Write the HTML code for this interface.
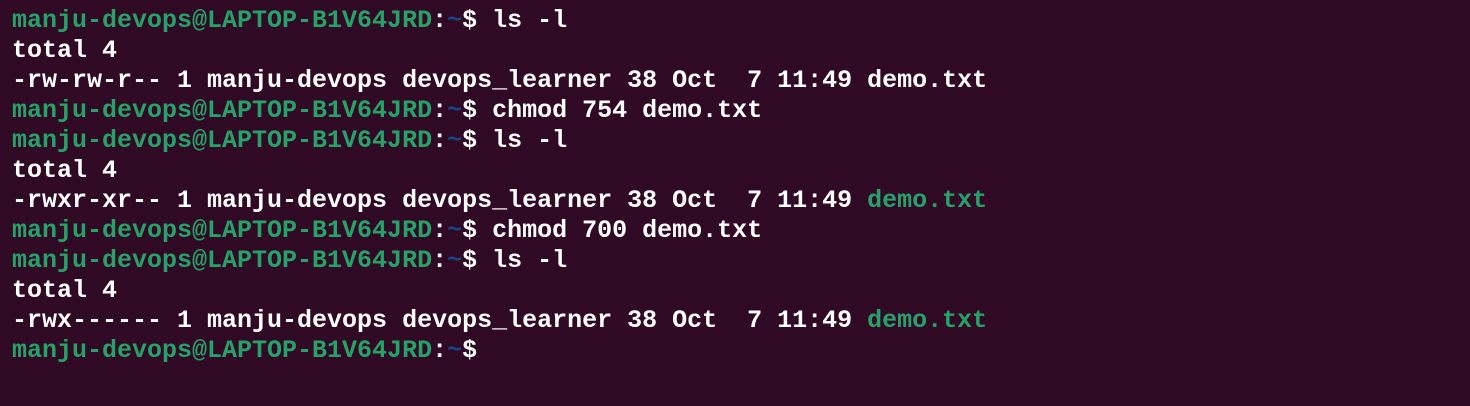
<!DOCTYPE html>
<html><head><style>
html,body{margin:0;padding:0;width:1470px;height:406px;background:#300a24;overflow:hidden}
pre{margin:0;padding:6px 0 0 12px;font-family:"Liberation Mono",monospace;font-size:25px;line-height:30px;color:#ffffff;font-weight:bold}
.g{color:#26a269}.b{color:#12488b}
</style></head><body><pre><span class="g">manju-devops@LAPTOP-B1V64JRD</span>:<span class="b">~</span>$ ls -l
total 4
-rw-rw-r-- 1 manju-devops devops_learner 38 Oct  7 11:49 demo.txt
<span class="g">manju-devops@LAPTOP-B1V64JRD</span>:<span class="b">~</span>$ chmod 754 demo.txt
<span class="g">manju-devops@LAPTOP-B1V64JRD</span>:<span class="b">~</span>$ ls -l
total 4
-rwxr-xr-- 1 manju-devops devops_learner 38 Oct  7 11:49 <span class="g">demo.txt</span>
<span class="g">manju-devops@LAPTOP-B1V64JRD</span>:<span class="b">~</span>$ chmod 700 demo.txt
<span class="g">manju-devops@LAPTOP-B1V64JRD</span>:<span class="b">~</span>$ ls -l
total 4
-rwx------ 1 manju-devops devops_learner 38 Oct  7 11:49 <span class="g">demo.txt</span>
<span class="g">manju-devops@LAPTOP-B1V64JRD</span>:<span class="b">~</span>$
</pre></body></html>
